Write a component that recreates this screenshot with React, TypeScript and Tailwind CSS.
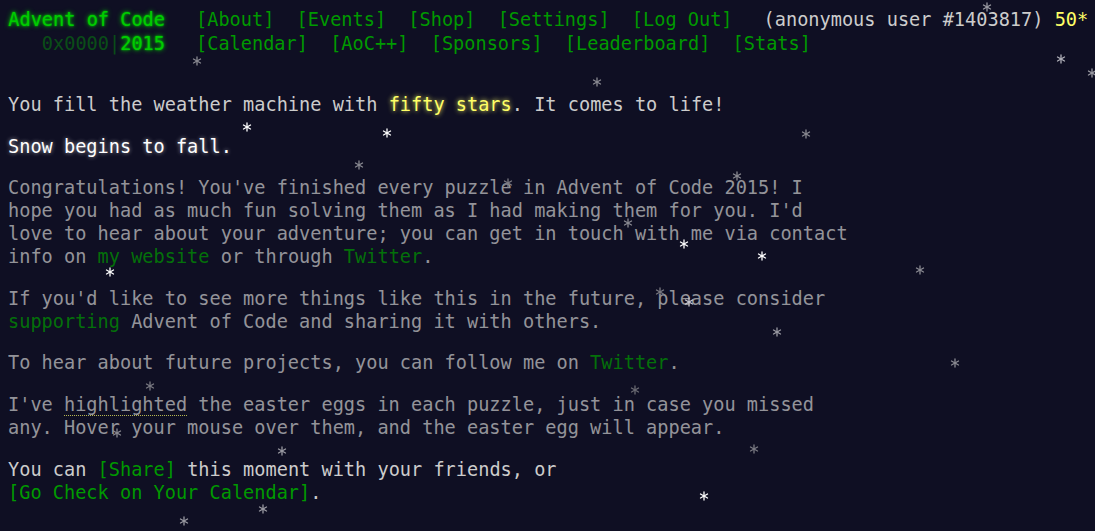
import React from "react";

type Star = [number, number, string];

const stars: Star[] = [
  [196.7, 60.7, "#8a8a92"],
  [986.7, 6.7, "#9a9aa2"],
  [1060.7, 59, "#b0b0b8"],
  [1091.7, 72.7, "#9a9aa2"],
  [597, 82, "#8a8a92"],
  [246.7, 126.7, "#ffffff"],
  [386.7, 133, "#ffffff"],
  [806, 134, "#8a8a92"],
  [358.5, 165, "#8a8a92"],
  [737.3, 175.7, "#8a8a92"],
  [508, 183, "#7a7a82"],
  [628.3, 222.7, "#8a8a92"],
  [684, 244, "#ffffff"],
  [762.3, 255.7, "#ffffff"],
  [920, 270, "#8a8a92"],
  [110, 272, "#ffffff"],
  [660, 291.7, "#7a7a82"],
  [689.3, 302, "#c8c8d0"],
  [776.7, 331.7, "#9a9aa2"],
  [955, 363.3, "#8a8a92"],
  [150, 386, "#7a7a82"],
  [635, 390, "#6a6a72"],
  [117.3, 433.3, "#8a8a92"],
  [281.7, 451, "#9a9aa2"],
  [754, 449, "#7a7a82"],
  [704, 495.7, "#ffffff"],
  [263.3, 509, "#9a9aa2"],
  [184, 520.5, "#9a9aa2"],
];

function Flake({ x, y, c }: { x: number; y: number; c: string }) {
  return (
    <svg
      className="absolute pointer-events-none"
      style={{ left: x - 5, top: y - 5 }}
      width={10}
      height={10}
      viewBox="0 0 10 10"
    >
      <g stroke={c} strokeWidth={1.3} strokeLinecap="round">
        <line x1="5" y1="1" x2="5" y2="9" />
        <line x1="1.5" y1="3" x2="8.5" y2="7" />
        <line x1="1.5" y1="7" x2="8.5" y2="3" />
      </g>
    </svg>
  );
}

const navLink = "text-[#009900]";
const glowGreen = "text-[#00cc00] [text-shadow:0_0_2px_#00cc00,0_0_5px_#00cc00]";

export default function App() {
  return (
    <div className="relative min-h-[531px] overflow-hidden bg-[#0f0f23] text-[#cccccc] font-['DejaVu_Sans_Mono','Liberation_Mono',monospace] text-[18.6px]">
      <header className="pl-[8px] pt-[8px] leading-[24px] whitespace-pre">
        <div className="flex">
          <div className={"w-[157px] text-right " + glowGreen}>Advent of Code</div>
          <nav className="ml-[31px] flex gap-[22.2px]">
            <span className={navLink}>[About]</span>
            <span className={navLink}>[Events]</span>
            <span className={navLink}>[Shop]</span>
            <span className={navLink}>[Settings]</span>
            <span className={navLink}>[Log Out]</span>
          </nav>
          <div className="ml-[31px]">
            (anonymous user #1403817) <span className="text-[#ffff66]">50*</span>
          </div>
        </div>
        <div className="flex">
          <div className="w-[157px] text-right">
            <span className="text-[#00cc00] opacity-[0.33]">0x0000|</span>
            <span className={glowGreen}>2015</span>
          </div>
          <nav className="ml-[31px] flex gap-[22.2px]">
            <span className={navLink}>[Calendar]</span>
            <span className={navLink}>[AoC++]</span>
            <span className={navLink}>[Sponsors]</span>
            <span className={navLink}>[Leaderboard]</span>
            <span className={navLink}>[Stats]</span>
          </nav>
        </div>
      </header>

      <main className="pl-[8px] pt-[37px] w-[852px] leading-[23px] flex flex-col gap-[18.6px]">
        <p>
          You fill the weather machine with{" "}
          <span className="text-[#ffff66] [text-shadow:0_0_5px_#ffff66]">fifty stars</span>. It comes to life!
        </p>
        <p className="text-white [text-shadow:0_0_4px_rgba(255,255,255,0.6)]">Snow begins to fall.</p>
        <p className="opacity-70">
          Congratulations! You've finished every puzzle in Advent of Code 2015! I hope you had as much fun
          solving them as I had making them for you. I'd love to hear about your adventure; you can get in
          touch with me via contact info on <span className={navLink}>my website</span> or through{" "}
          <span className={navLink}>Twitter</span>.
        </p>
        <p className="opacity-70">
          If you'd like to see more things like this in the future, please consider{" "}
          <span className={navLink}>supporting</span> Advent of Code and sharing it with others.
        </p>
        <p className="opacity-70">
          To hear about future projects, you can follow me on <span className={navLink}>Twitter</span>.
        </p>
        <p className="opacity-70">
          I've <span className="border-b border-dotted border-[#ffff66]">highlighted</span> the easter eggs in
          each puzzle, just in case you missed any. Hover your mouse over them, and the easter egg will appear.
        </p>
        <p>
          You can <span className={navLink}>[Share]</span> this moment with your friends, or
          <br />
          <span className={navLink}>[Go Check on Your Calendar]</span>.
        </p>
      </main>

      {stars.map(([x, y, c], i) => (
        <Flake key={i} x={x} y={y} c={c} />
      ))}
    </div>
  );
}
